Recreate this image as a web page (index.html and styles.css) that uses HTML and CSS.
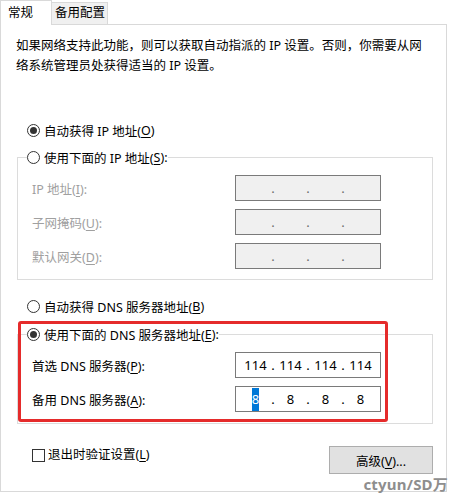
FILE: index.html
```html
<!DOCTYPE html>
<html lang="zh-CN">
<head>
  <meta charset="UTF-8" />
  <title>Internet 协议版本 4 (TCP/IPv4) 属性</title>
  <link rel="stylesheet" href="styles.css">
</head>
<body>
  <div class="dialog">
    <div class="tabs">
      <div class="tab active">常规</div>
      <div class="tab">备用配置</div>
    </div>
    <div class="panel">
      <p class="intro">如果网络支持此功能，则可以获取自动指派的 IP 设置。否则，你需要从网络系统管理员处获得适当的 IP 设置。</p>

      <label class="radio checked first"><span class="dot"></span>自动获得 IP 地址(<u>O</u>)</label>
      <fieldset class="group">
        <legend><label class="radio"><span class="dot"></span>使用下面的 IP 地址(<u>S</u>):</label></legend>
        <div class="fields disabled">
          <span>IP 地址(<u>I</u>):</span>
          <div class="ip-box"><span></span><span>.</span><span></span><span>.</span><span></span><span>.</span><span></span></div>
          <span>子网掩码(<u>U</u>):</span>
          <div class="ip-box"><span></span><span>.</span><span></span><span>.</span><span></span><span>.</span><span></span></div>
          <span>默认网关(<u>D</u>):</span>
          <div class="ip-box"><span></span><span>.</span><span></span><span>.</span><span></span><span>.</span><span></span></div>
        </div>
      </fieldset>

      <label class="radio dns-auto"><span class="dot"></span>自动获得 DNS 服务器地址(<u>B</u>)</label>
      <fieldset class="group dns">
        <legend><label class="radio checked"><span class="dot"></span>使用下面的 DNS 服务器地址(<u>E</u>):</label></legend>
        <div class="fields">
          <span>首选 DNS 服务器(<u>P</u>):</span>
          <div class="ip-box"><span>114</span><span>.</span><span>114</span><span>.</span><span>114</span><span>.</span><span>114</span></div>
          <span>备用 DNS 服务器(<u>A</u>):</span>
          <div class="ip-box"><span><span class="sel">8</span></span><span>.</span><span>8</span><span>.</span><span>8</span><span>.</span><span>8</span></div>
        </div>
      </fieldset>

      <div class="footer">
        <label class="check"><span class="box"></span>退出时验证设置(<u>L</u>)</label>
        <button class="btn">高级(<u>V</u>)...</button>
      </div>

      <div class="mark"></div>
    </div>
  </div>
  <div class="watermark">ctyun/SD万</div>
</body>
</html>
```

FILE: styles.css
```css
* { margin:0; padding:0; box-sizing:border-box; }
body {
  font-family:"Noto Sans", "Noto Sans CJK SC", sans-serif;
  font-size:12.5px; color:#000;
  background:#fff;
  width:449px; height:493px; overflow:hidden;
  position:relative;
}
u { text-decoration:underline; text-underline-offset:2px; }

.tabs {
  display:flex; align-items:flex-end;
  height:25px; width:447px;
  border-bottom:1px solid #d9d9d9;
}
.tab {
  height:22px; line-height:20px;
  padding-left:3px; width:56px;
  background:#f0f0f0;
  border:1px solid #d9d9d9; border-bottom:none; border-left:none;
}
.tab.active {
  height:25px; width:52px; margin-bottom:-1px;
  padding-left:7px; line-height:23px;
  background:#fff;
  border-left:1px solid #d9d9d9;
}

.panel {
  position:relative;
  width:447px; height:467px;
  padding:11px 13px 0 15px;
  border:1px solid #d9d9d9; border-top:none;
  background:#fff;
}
.intro { line-height:20px; max-width:410px; }

.radio { display:flex; align-items:center; height:20px; white-space:nowrap; }
.radio .dot {
  width:13px; height:13px; margin-right:4px;
  border:1px solid #333; border-radius:50%;
  background:#fff; position:relative; flex:none;
}
.radio.checked .dot::after {
  content:""; position:absolute; left:2px; top:2px;
  width:7px; height:7px; border-radius:50%; background:#333;
}
.radio.first { margin-top:44px; padding-left:11px; }
.radio.dns-auto { margin-top:16px; padding-left:11px; }

.group {
  margin:7px 0 0 1px;
  padding:8px 0 10px 9px;
  border:1px solid #dcdcdc;
  min-width:0;
}
.group legend { padding:0; }
.group.dns { margin-top:8px; padding-bottom:11px; }

.fields {
  display:grid; grid-template-columns:203px 146px;
  row-gap:8px; align-items:center;
  padding-left:5px;
}
.fields.disabled > span { color:#a0a0a0; }

.ip-box {
  height:26px; border:1px solid #7a7a7a; background:#fff;
  display:grid; grid-template-columns:28px 7px 28px 7px 28px 7px 28px;
  justify-content:center; align-items:center;
  text-align:center; font-size:13px;
}
.disabled .ip-box { background:#f0f0f0; color:#6d6d6d; }
.ip-box .sel { background:#0078d7; color:#fff; padding:2px 0 3px; }

.footer {
  display:flex; justify-content:space-between; align-items:flex-start;
  margin-top:22px; padding-left:16px;
}
.check { display:flex; align-items:center; line-height:16px; margin-top:1px; }
.check .box {
  width:13px; height:13px; margin-right:3px;
  border:1px solid #333; background:#fff;
}
.btn {
  width:104px; height:28px;
  font:inherit; color:#000;
  background:#e1e1e1; border:1px solid #adadad;
}

.mark {
  position:absolute; left:17px; top:296px;
  width:370px; height:101px;
  border:3px solid #e52b2b; border-radius:3px;
}

.watermark {
  position:absolute; right:1px; bottom:-1px;
  font-size:15px; font-weight:bold; color:#8e8e8e;
  letter-spacing:0.2px;
}
```
